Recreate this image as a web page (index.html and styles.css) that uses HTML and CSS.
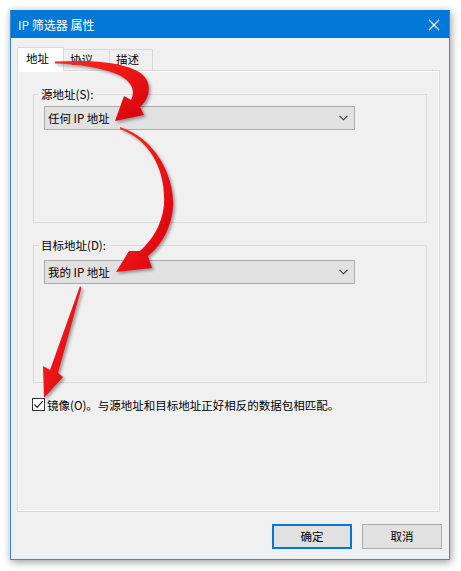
FILE: index.html
```html
<!DOCTYPE html>
<html lang="zh-CN">
<head>
<meta charset="utf-8">
<title>IP 筛选器 属性</title>
<link rel="stylesheet" href="styles.css">
</head>
<body>
<div class="window">
  <div class="titlebar">
    <span class="title">IP 筛选器 属性</span>
    <svg class="close" width="12" height="12" viewBox="0 0 12 12"><path d="M1 1 L11 11 M11 1 L1 11" stroke="#fff" stroke-width="1.1" fill="none"/></svg>
  </div>
  <div class="client">
    <div class="tabs">
      <div class="tab active">地址</div>
      <div class="tab t2">协议</div>
      <div class="tab t3">描述</div>
    </div>
    <div class="panel">
      <fieldset class="group g1">
        <legend>源地址(S):</legend>
        <div class="combo"><span>任何 IP 地址</span><svg class="chev" width="9" height="6" viewBox="0 0 9 6"><path d="M0.5 0.8 L4.5 4.8 L8.5 0.8" stroke="#333" stroke-width="1.1" fill="none"/></svg></div>
      </fieldset>
      <fieldset class="group g2">
        <legend>目标地址(D):</legend>
        <div class="combo"><span>我的 IP 地址</span><svg class="chev" width="9" height="6" viewBox="0 0 9 6"><path d="M0.5 0.8 L4.5 4.8 L8.5 0.8" stroke="#333" stroke-width="1.1" fill="none"/></svg></div>
      </fieldset>
      <div class="check">
        <span class="box"><svg width="11" height="11" viewBox="0 0 11 11"><path d="M1.5 5.5 L4.2 8.3 L9.6 2.2" stroke="#222" stroke-width="1.2" fill="none"/></svg></span>
        <span class="label">镜像(O)。与源地址和目标地址正好相反的数据包相匹配。</span>
      </div>
    </div>
    <div class="buttons">
      <div class="btn default">确定</div>
      <div class="btn">取消</div>
    </div>
  </div>
</div>
<svg class="arrows" width="461" height="571" viewBox="0 0 461 571">
  <defs>
    <linearGradient id="rg" x1="0" y1="0" x2="1" y2="1">
      <stop offset="0" stop-color="#ff2a22"/>
      <stop offset="1" stop-color="#d8000c"/>
    </linearGradient>
  </defs>
  <path fill="url(#rg)" d="M55,61.5 C85,60 121,61 139,72 C153,81 151,98 140,107 L144,115 L115,121 L124,96 L131,100 C136,90 131,81 119,75 C101,67 76,64 55,63.5 Z"/>
  <path fill="url(#rg)" d="M120,127 C160,140 178,185 172,215 C168,235 158,248 148,256 L152,268 L116,272 L129,251 L140,251 C152,240 162,225 164,205 C166,170 150,140 120,129 Z"/>
  <path fill="url(#rg)" d="M80,286 L81.5,288 L58,373 L63,377 L44,398 L43,366 L50,370 Z"/>
</svg>
</body>
</html>
```
FILE: styles.css
```css
* { box-sizing: border-box; }
html, body { margin: 0; padding: 0; }
body {
  position: relative;
  width: 461px;
  height: 571px;
  padding: 10px 0 0 10px;
  background: #ffffff;
  font-family: "Noto Sans CJK SC", "Noto Sans", sans-serif;
  font-size: 11.5px;
  color: #000;
  overflow: hidden;
}
.window {
  width: 440px;
  height: 550px;
  border: 1px solid #3b8ad6;
  border-top-color: #0078d7;
  background: #f0f0f0;
  box-shadow: 1px 2px 8px rgba(0,0,0,0.4);
  display: flex;
  flex-direction: column;
}
.titlebar {
  height: 27px;
  background: #0078d7;
  display: flex;
  align-items: center;
  justify-content: space-between;
  padding: 0 9px 0 7px;
  color: #fff;
  font-size: 12px;
}
.title { line-height: 16px; }
.close { display: block; }
.client {
  flex: 1;
  display: flex;
  flex-direction: column;
  padding: 9px 7px 0 6px;
}
.tabs {
  display: flex;
  align-items: flex-end;
  height: 23px;
  position: relative;
  z-index: 1;
}
.tab {
  height: 21px;
  border: 1px solid #d9d9d9;
  border-bottom: none;
  background: #f0f0f0;
  line-height: 19px;
  padding-left: 6px;
  margin-left: -1px;
}
.tab.active {
  height: 24px;
  margin-bottom: -1px;
  margin-left: 0;
  width: 47px;
  padding-left: 8px;
  background: #ffffff;
  line-height: 20px;
  position: relative;
  z-index: 2;
}
.t2 { width: 47px; }
.t3 { width: 44px; }
.panel {
  width: 423px;
  height: 442px;
  border: 1px solid #d9d9d9;
  box-shadow: inset 0 0 0 1px #ffffff;
  background: #f0f0f0;
  padding: 15px 0 0 15px;
  display: flex;
  flex-direction: column;
}
.group {
  margin: 0;
  width: 394px;
  border: 1px solid #dcdcdc;
  padding: 4px 10px 0 10px;
  min-width: 0;
}
.group legend {
  padding: 0 2px;
  margin-left: -5px;
  line-height: 16px;
}
.g1 { height: 137px; }
.g2 { height: 146px; margin-top: 14px; padding-top: 7px; }
.combo {
  width: 311px;
  height: 24px;
  border: 1px solid #adadad;
  background: #e1e1e1;
  display: flex;
  align-items: center;
  justify-content: space-between;
  padding: 0 6px 0 3px;
  line-height: 16px;
}
.chev { display: block; }
.check {
  margin-top: 15px;
  margin-left: -1px;
  display: flex;
  align-items: center;
  height: 13px;
}
.box {
  width: 13px;
  height: 13px;
  border: 1px solid #333;
  background: #fff;
  display: flex;
  align-items: center;
  justify-content: center;
  margin-right: 2px;
}
.box svg { display: block; }
.label { line-height: 16px; }
.buttons {
  display: flex;
  justify-content: flex-end;
  gap: 10px;
  margin-top: 12px;
  margin-right: 0;
}
.btn {
  width: 80px;
  height: 25px;
  border: 1px solid #adadad;
  background: #e1e1e1;
  text-align: center;
  line-height: 23px;
}
.btn.default {
  border-color: #0078d7;
  box-shadow: inset 0 0 0 1px #0078d7;
}
.arrows {
  position: absolute;
  left: 0;
  top: 0;
  z-index: 10;
  pointer-events: none;
  filter: drop-shadow(2px 2px 1.5px rgba(0,0,0,0.35));
}
```
